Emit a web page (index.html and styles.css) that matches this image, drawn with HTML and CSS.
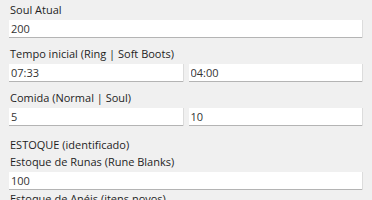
FILE: index.html
```html
<!DOCTYPE html>
<html lang="pt">
  <head>
    <meta charset="UTF-8" />
    <meta name="viewport" content="width=device-width, initial-scale=1.0" />
    <title>Calculadora de Soul</title>
    <link rel="stylesheet" href="styles.css">
  </head>
  <body>
    <div class="form">
      <div class="field">
        <label class="label" for="soul">Soul Atual</label>
        <input class="input" id="soul" type="text" value="200" />
      </div>

      <div class="field">
        <label class="label">Tempo inicial (Ring | Soft Boots)</label>
        <div class="pair">
          <input class="input" type="text" value="07:33" />
          <input class="input" type="text" value="04:00" />
        </div>
      </div>

      <div class="field">
        <label class="label">Comida (Normal | Soul)</label>
        <div class="pair">
          <input class="input" type="text" value="5" />
          <input class="input" type="text" value="10" />
        </div>
      </div>

      <div class="section">ESTOQUE (identificado)</div>

      <div class="field tight">
        <label class="label" for="runas">Estoque de Runas (Rune Blanks)</label>
        <input class="input" id="runas" type="text" value="100" />
      </div>

      <div class="field">
        <label class="label" for="aneis">Estoque de Anéis (itens novos)</label>
        <input class="input" id="aneis" type="text" value="" />
      </div>
    </div>
  </body>
</html>
```

FILE: styles.css
```css
body {
  margin: 0;
  padding: 0;
  background: #f0f0f0;
  color: #1e1e1e;
  font-family: "Open Sans", "Noto Sans", sans-serif;
  font-size: 11px;
}

.form {
  display: flex;
  flex-direction: column;
  padding: 2px 10px 0 9px;
}

.field {
  display: flex;
  flex-direction: column;
  margin-bottom: 8px;
}

.field.tight {
  margin-bottom: 1px;
}

.label {
  display: block;
  line-height: 16px;
  height: 16px;
  margin-bottom: 2px;
  margin-left: 1px;
}

.section {
  line-height: 16px;
  margin: 3px 0 1px 1px;
}

.pair {
  display: flex;
  gap: 6px;
}

.pair .input {
  flex: 1;
  min-width: 0;
}

.input {
  box-sizing: border-box;
  height: 18px;
  width: 100%;
  margin: 0;
  padding: 0 2px;
  border: none;
  border-bottom: 1px solid #b4b4b4;
  box-shadow: 1px 0 0 #dcdcdc;
  background: #fff;
  color: #333;
  font-family: "Open Sans", "Noto Sans", sans-serif;
  font-size: 11px;
  outline: none;
}
```
